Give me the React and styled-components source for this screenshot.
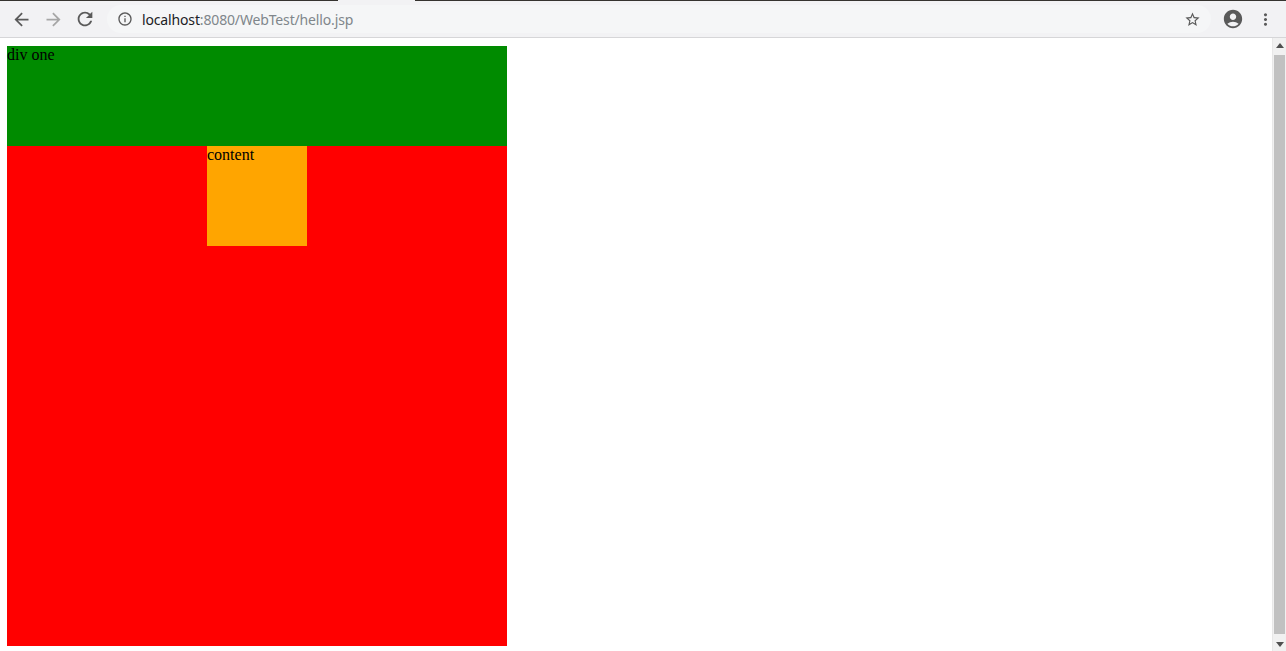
import React from "react";
import styled, { createGlobalStyle } from "styled-components";
import {
  MdArrowBack,
  MdArrowForward,
  MdRefresh,
  MdInfoOutline,
  MdStarBorder,
  MdAccountCircle,
  MdMoreVert,
} from "react-icons/md";

const GlobalStyle = createGlobalStyle`
  html, body {
    margin: 0;
    padding: 0;
    height: 100%;
    overflow: hidden;
  }
  #root {
    height: 100%;
  }
`;

const Window = styled.div`
  height: 100vh;
  display: flex;
  flex-direction: column;
  background: #fff;
`;

const TabEdge = styled.div`
  height: 1px;
  display: flex;
  background: #f2f2f4;
`;

const EdgePart = styled.div`
  width: ${(p) => (p.$w ? `${p.$w}px` : "auto")};
  flex: ${(p) => (p.$w ? "none" : 1)};
  background: ${(p) => (p.$dark ? "#35332f" : "#f2f2f4")};
`;

const Toolbar = styled.div`
  height: 36px;
  display: flex;
  align-items: center;
  padding: 0 5px;
  background: #f2f2f4;
  border-bottom: 1px solid #d6d6d8;
`;

const NavButton = styled.div`
  width: 32px;
  height: 32px;
  display: flex;
  align-items: center;
  justify-content: center;
  color: ${(p) => (p.$disabled ? "#a6a6a6" : "#5a5a5a")};
  flex: none;
`;

const Omnibox = styled.div`
  flex: 1;
  height: 28px;
  margin: 0 6px;
  border-radius: 14px;
  background: #f5f6f7;
  display: flex;
  align-items: center;
  padding: 0 10px;
  color: #5a5a5a;
`;

const Url = styled.div`
  flex: 1;
  margin-left: 9px;
  font-family: "Noto Sans", "DejaVu Sans", sans-serif;
  font-size: 14px;
  color: #202124;
  letter-spacing: -0.15px;
`;

const UrlRest = styled.span`
  color: #80868b;
`;

const Viewport = styled.div`
  flex: 1;
  display: flex;
  min-height: 0;
`;

const Page = styled.div`
  flex: 1;
  overflow: hidden;
  padding: 8px 0 0 7px;
  font-family: "Liberation Serif", "Times New Roman", serif;
  font-size: 16px;
  color: #000;
`;

const Block = styled.div`
  width: ${(p) => p.$w}px;
  height: ${(p) => p.$h}px;
  background: ${(p) => p.$bg};
  margin-left: ${(p) => p.$ml || 0}px;
  line-height: 18px;
`;

const Scrollbar = styled.div`
  width: 14px;
  background: #f1f1f1;
  border-left: 1px solid #e8e8e8;
  display: flex;
  flex-direction: column;
  align-items: center;
  padding: 0 1px 0 1px;
  box-sizing: border-box;
`;

const Arrow = styled.div`
  height: 14px;
  flex: none;
  display: flex;
  align-items: center;
  justify-content: center;
  width: 100%;
`;

const Thumb = styled.div`
  flex: 1;
  width: 100%;
  margin: 3px 0;
  background: #c1c1c1;
`;

const Triangle = ({ down }) => (
  <svg width="8" height="5" viewBox="0 0 8 5">
    <path d={down ? "M0 0 H8 L4 5 Z" : "M0 5 H8 L4 0 Z"} fill="#505050" />
  </svg>
);

const App = () => {
  return (
    <>
      <GlobalStyle />
      <Window>
        <TabEdge>
          <EdgePart $dark $w={338} />
          <EdgePart $w={77} />
          <EdgePart $dark />
        </TabEdge>
        <Toolbar>
          <NavButton>
            <MdArrowBack size={21} />
          </NavButton>
          <NavButton $disabled>
            <MdArrowForward size={21} />
          </NavButton>
          <NavButton>
            <MdRefresh size={22} />
          </NavButton>
          <Omnibox>
            <MdInfoOutline size={16} />
            <Url>
              localhost<UrlRest>:8080/WebTest/hello.jsp</UrlRest>
            </Url>
            <MdStarBorder size={17} />
          </Omnibox>
          <NavButton>
            <MdAccountCircle size={22} />
          </NavButton>
          <NavButton>
            <MdMoreVert size={19} />
          </NavButton>
        </Toolbar>
        <Viewport>
          <Page>
            <Block $w={500} $h={100} $bg="#008b00">
              div one
            </Block>
            <Block $w={500} $h={500} $bg="#ff0000">
              <Block $w={100} $h={100} $bg="#ffa500" $ml={200}>
                content
              </Block>
            </Block>
          </Page>
          <Scrollbar>
            <Arrow>
              <Triangle />
            </Arrow>
            <Thumb />
            <Arrow>
              <Triangle down />
            </Arrow>
          </Scrollbar>
        </Viewport>
      </Window>
    </>
  );
};

export default App;
